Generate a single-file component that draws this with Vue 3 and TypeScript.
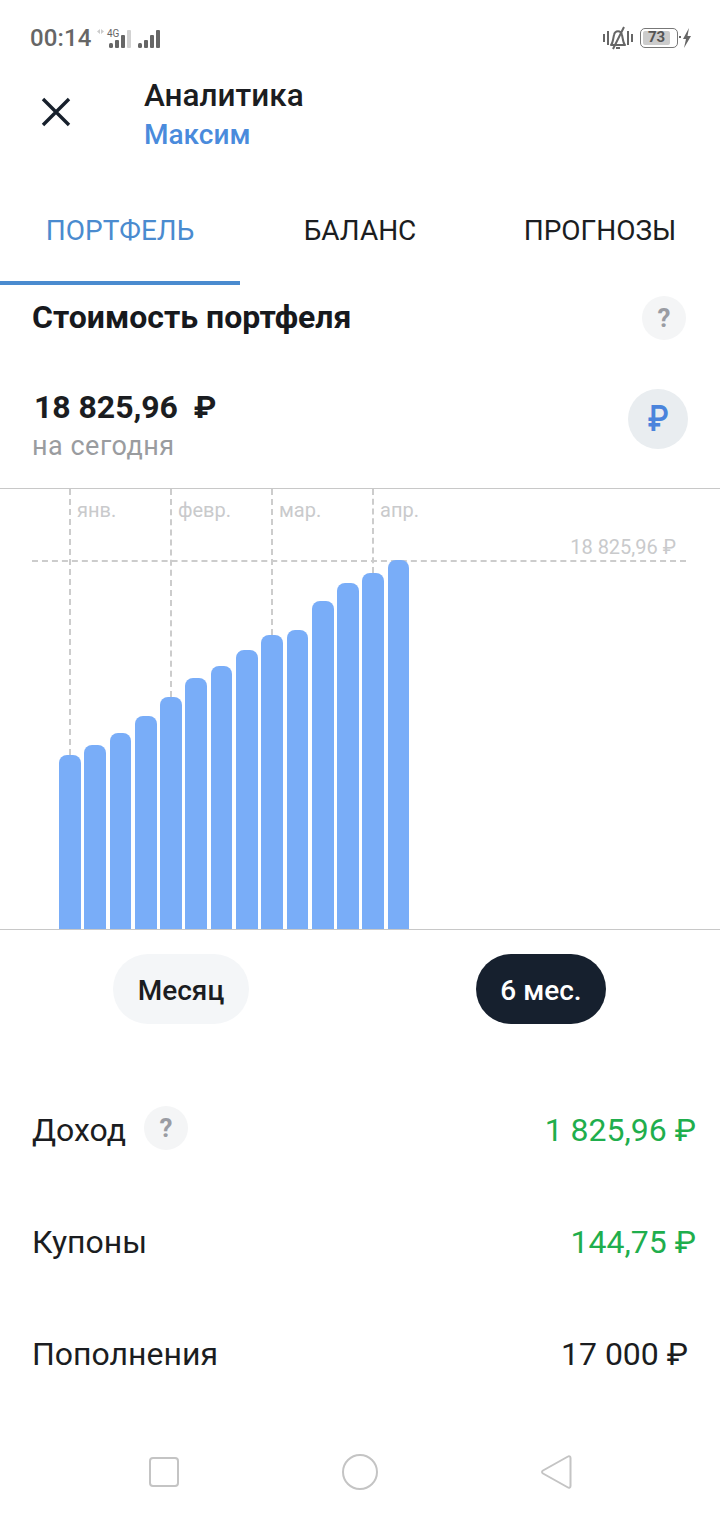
<script setup lang="ts">
const tabs = [
  { label: 'ПОРТФЕЛЬ', active: true },
  { label: 'БАЛАНС', active: false },
  { label: 'ПРОГНОЗЫ', active: false },
]

// bar heights in px, measured up from the chart baseline
const bars = [174, 184, 196, 213, 232, 251, 263, 279, 294, 299, 328, 346, 356, 369]

const months = [
  { label: 'янв.', x: 69, bottom: 755 },
  { label: 'февр.', x: 170, bottom: 697 },
  { label: 'мар.', x: 271, bottom: 635 },
  { label: 'апр.', x: 372, bottom: 573 },
]
const chartTop = 489
</script>

<template>
  <div class="screen">
    <div class="status">
      <div class="status-left">
        <span class="clock">00:14</span>
        <svg class="net" width="66" height="24" viewBox="0 0 66 24">
          <path d="M5 3 2 5.500 5 8zM6 3l3 2.500L6 8z" fill="#ccc" />
          <text x="12" y="11" class="net-label">4G</text>
          <g fill="#666">
            <rect x="14" y="17" width="4" height="5" rx="1.500" />
            <rect x="20" y="14" width="4" height="8" rx="1" />
            <rect x="26" y="9" width="4" height="13" rx="1" />
            <rect x="32" y="4" width="4" height="18" rx="1" fill="#d2d2d2" />
            <rect x="43" y="17" width="4" height="5" rx="1.500" />
            <rect x="49" y="14" width="4" height="8" rx="1" />
            <rect x="55" y="9" width="4" height="13" rx="1" />
            <rect x="61" y="4" width="4" height="18" rx="1" />
          </g>
        </svg>
      </div>
      <div class="status-right">
        <svg class="bell" width="30" height="24" viewBox="0 0 30 24" fill="none" stroke="#666" stroke-width="2">
          <path d="M1 8v8M5 5v14M25 5v14M29 8v8" />
          <path d="M8 19c2-2 2-6 3-10 1-5 7-5 8 0 1 4 1 8 3 10zM13 22h4M10 23 21 1" stroke-linejoin="round" />
        </svg>
        <div class="battery"><span class="battery-level">73</span></div>
        <svg width="14" height="20" viewBox="0 0 14 20" fill="#666">
          <path d="M1 8h2v2H1zM11 0 5 11h3l-2 9 7-12H9.500z" />
        </svg>
      </div>
    </div>

    <header class="head">
      <svg class="close" width="32" height="32" viewBox="0 0 32 32" fill="none" stroke="#17202c" stroke-width="3.4">
        <path d="M3 3 29 29M29 3 3 29" />
      </svg>
      <div class="head-text">
        <div class="head-title">Аналитика</div>
        <div class="head-sub">Максим</div>
      </div>
    </header>

    <nav class="tabs">
      <div v-for="t in tabs" :key="t.label" class="tab" :class="{ active: t.active }">{{ t.label }}</div>
    </nav>

    <section class="summary">
      <div class="summary-top">
        <h2 class="summary-title">Стоимость портфеля</h2>
        <span class="hint">?</span>
      </div>
      <div class="summary-value">
        <div>
          <div class="amount">18 825,96 &nbsp;₽</div>
          <div class="today">на сегодня</div>
        </div>
        <span class="currency"><span class="currency-sign">₽</span></span>
      </div>
    </section>

    <div class="chart">
      <template v-for="m in months" :key="m.label">
        <div class="month-line" :style="{ left: m.x + 'px', height: m.bottom - chartTop + 'px' }"></div>
        <div class="month-label" :style="{ left: m.x + 7 + 'px' }">{{ m.label }}</div>
      </template>
      <div class="max-label">18 825,96 ₽</div>
      <div class="max-line"></div>
      <div class="bars">
        <div v-for="(h, i) in bars" :key="i" class="bar" :style="{ height: h + 'px' }"></div>
      </div>
    </div>

    <div class="periods">
      <button class="period">Месяц</button>
      <button class="period selected">6 мес.</button>
    </div>

    <div class="rows">
      <div class="row">
        <div class="row-name">Доход <span class="hint small">?</span></div>
        <div class="row-value green">1 825,96 ₽</div>
      </div>
      <div class="row">
        <div class="row-name">Купоны</div>
        <div class="row-value green">144,75 ₽</div>
      </div>
      <div class="row narrow">
        <div class="row-name">Пополнения</div>
        <div class="row-value">17 000 ₽</div>
      </div>
    </div>

    <div class="navbar">
      <svg width="32" height="32" viewBox="0 0 32 32" fill="none" stroke="#c4c4c4" stroke-width="2">
        <rect x="2" y="2" width="28" height="28" rx="3" />
      </svg>
      <svg width="38" height="38" viewBox="0 0 38 38" fill="none" stroke="#c4c4c4" stroke-width="2">
        <circle cx="19" cy="19" r="17" />
      </svg>
      <svg width="32" height="36" viewBox="0 0 32 36" fill="none" stroke="#c4c4c4" stroke-width="2" stroke-linejoin="round">
        <path d="M28 2.500c1-.700 2.500 0 2.500 1.500v28c0 1.500-1.500 2.200-2.500 1.500L3 19.500c-1.300-.800-1.300-2.200 0-3z" />
      </svg>
    </div>
  </div>
</template>

<style scoped>
.screen {
  position: relative;
  width: 720px;
  height: 1520px;
  background: #fff;
  overflow: hidden;
  font-family: Roboto, "Noto Sans", sans-serif;
  color: #1b1d21;
}

.status {
  height: 76px;
  padding: 0 30px;
  display: flex;
  justify-content: space-between;
  align-items: center;
}
.status-left,
.status-right {
  display: flex;
  align-items: center;
}
.status-right {
  margin-right: -2px;
}
.clock {
  font-size: 24px;
  font-weight: 500;
  color: #666;
  letter-spacing: 0.1px;
}
.net {
  margin-left: 4px;
}
.net-label {
  font-size: 10px;
  fill: #666;
  font-family: Roboto, sans-serif;
}
.bell {
  margin-right: 7px;
}
.battery {
  width: 38px;
  height: 20px;
  border: 1.500px solid #777;
  border-radius: 5px;
  padding: 2px;
  box-sizing: border-box;
  display: flex;
}
.battery-level {
  width: 27px;
  background: #ccc;
  border-radius: 2px;
  font-size: 15px;
  font-weight: 700;
  line-height: 13px;
  color: #555;
  text-align: center;
}

.head {
  height: 108px;
  display: flex;
  padding-left: 40px;
}
.close {
  margin-top: 20px;
}
.head-text {
  margin-left: 72px;
  padding-top: 1px;
}
.head-title {
  font-size: 31.500px;
  font-weight: 500;
  line-height: 38px;
  color: #1b1d21;
}
.head-sub {
  font-size: 28px;
  font-weight: 500;
  line-height: 40px;
  color: #4a8bdc;
}

.tabs {
  display: flex;
  height: 101px;
}
.tab {
  width: 240px;
  padding-top: 30px;
  box-sizing: border-box;
  font-size: 28px;
  line-height: 34px;
  text-align: center;
  color: #1b1d21;
}
.tab.active {
  color: #4a8bcf;
  border-bottom: 4px solid #4a8bcf;
}

.summary {
  padding: 0 32px;
  height: 203px;
}
.summary-top {
  display: flex;
  justify-content: space-between;
  align-items: center;
  height: 66px;
}
.summary-title {
  margin: 0 0 2px;
  font-size: 32px;
  font-weight: 700;
  line-height: 38px;
  color: #17191d;
}
.hint {
  width: 44px;
  height: 44px;
  margin-right: 2px;
  border-radius: 50%;
  background: #f4f5f6;
  color: #9a9ca3;
  font-size: 26px;
  font-weight: 700;
  display: inline-flex;
  align-items: center;
  justify-content: center;
}
.summary-value {
  display: flex;
  justify-content: space-between;
  align-items: center;
  margin-top: 36px;
}
.amount {
  font-size: 32px;
  font-weight: 700;
  line-height: 40px;
  margin-left: 2px;
  letter-spacing: -0.05px;
}
.today {
  margin-top: 2px;
  font-size: 27px;
  line-height: 34px;
  color: #9a9c9f;
  letter-spacing: 0.5px;
}
.currency {
  width: 60px;
  height: 60px;
  margin-bottom: 12px;
  border-radius: 50%;
  background: #e9edf0;
  color: #4a84dc;
  font-size: 36px;
  font-weight: 500;
  display: flex;
  align-items: center;
  justify-content: center;
}
.currency-sign {
  display: block;
  transform: scaleX(0.85);
}

.chart {
  position: relative;
  height: 442px;
  border-top: 1px solid #c8c8c8;
  border-bottom: 1px solid #c8c8c8;
  box-sizing: border-box;
}
.month-line {
  position: absolute;
  top: 0;
  border-left: 2px dashed #ccc;
}
.month-label {
  position: absolute;
  top: 8px;
  margin-left: 1px;
  font-size: 20px;
  line-height: 26px;
  color: #c9cacc;
}
.max-label {
  position: absolute;
  top: 45px;
  right: 44px;
  font-size: 20px;
  line-height: 26px;
  color: #c9cacc;
}
.max-line {
  position: absolute;
  top: 71px;
  left: 32px;
  right: 34px;
  border-top: 2px dashed #ccc;
}
.bars {
  position: absolute;
  left: 59px;
  bottom: 0;
  display: flex;
  align-items: flex-end;
  gap: 3.600px;
}
.bar {
  width: 21.700px;
  background: #79adf8;
  border-radius: 8px 8px 0 0;
}

.periods {
  display: flex;
  padding-top: 24px;
  height: 105px;
  box-sizing: border-box;
}
.period {
  height: 70px;
  padding-top: 3px;
  margin-left: 113px;
  width: 136px;
  border: none;
  border-radius: 35px;
  background: #f4f6f8;
  color: #1b1d21;
  font-family: inherit;
  font-size: 28px;
  font-weight: 500;
}
.period.selected {
  width: 130px;
  margin-left: 227px;
  background: #16202e;
  color: #fff;
}

.rows {
  padding-top: 39px;
}
.row {
  height: 112px;
  padding: 0 24px 0 32px;
  display: flex;
  justify-content: space-between;
  align-items: center;
  box-sizing: border-box;
  font-size: 32px;
}
.row.narrow {
  padding-right: 32px;
}
.row-name {
  display: flex;
  align-items: center;
  gap: 18px;
}
.row-value.green {
  color: #1fae4d;
}
.hint.small {
  margin: 0 0 4px;
}

.navbar {
  position: absolute;
  top: 1453px;
  left: 148px;
  width: 424px;
  height: 38px;
  display: flex;
  justify-content: space-between;
  align-items: center;
}
</style>
